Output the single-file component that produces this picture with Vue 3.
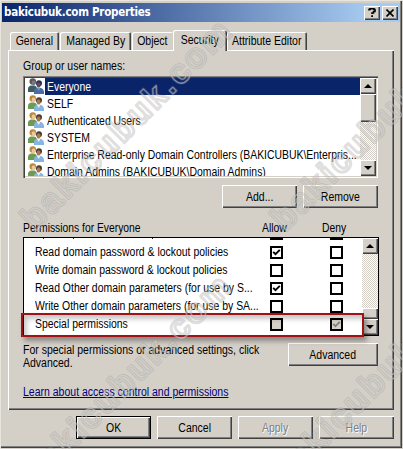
<script setup>
import { ref } from "vue";

const tabs = [
	{ name: "General", cls: "general" },
	{ name: "Managed By", cls: "managed" },
	{ name: "Object", cls: "object" },
	{ name: "Security", cls: "security" },
	{ name: "Attribute Editor", cls: "attribute" },
];
const activeTab = ref("Security");

const users = [
	"Everyone",
	"SELF",
	"Authenticated Users",
	"SYSTEM",
	"Enterprise Read-only Domain Controllers (BAKICUBUK\\Enterpris...",
	"Domain Admins (BAKICUBUK\\Domain Admins)",
];
const selectedUser = ref("Everyone");

const permissions = ref([
	{ name: "Read domain password & lockout policies", allow: true, deny: false },
	{ name: "Write domain password & lockout policies", allow: false, deny: false },
	{ name: "Read Other domain parameters (for use by S...", allow: true, deny: false },
	{ name: "Write Other domain parameters (for use by SA...", allow: false, deny: false },
	{ name: "Special permissions", allow: false, deny: true, disabled: true },
]);

const marks = [
	[35, 232],
	[285, 232],
	[35, 487],
	[285, 487],
];
</script>

<template>
	<div class="dialog">
		<header class="titlebar">
			<span class="title">bakicubuk.com Properties</span>
			<button class="caption">
				<svg width="8" height="9" viewBox="0 0 8 9">
					<path d="M1 2.5V1.5H2V.8H6V1.5H7V3.5H5.5V5H4V6" fill="none" stroke="#000" stroke-width="1.6" />
					<path d="M3.2 7.3h1.8v1.7h-1.8z" />
				</svg>
			</button>
			<button class="caption">
				<svg width="8" height="8" viewBox="0 0 8 8">
					<path d="M.5 .5L7.5 7.5M7.5 .5L.5 7.5" stroke="#000" stroke-width="1.6" />
				</svg>
			</button>
		</header>

		<nav class="tabs">
			<button
				v-for="tab in tabs"
				:key="tab.name"
				class="tab"
				:class="[tab.cls, { active: tab.name === activeTab }]"
				@click="activeTab = tab.name"
			>
				<span class="text">{{ tab.name }}</span>
			</button>
		</nav>

		<main class="page">
			<div class="label"><span class="text">Group or user names:</span></div>
			<div class="users">
				<ul>
					<li
						v-for="user in users"
						:key="user"
						:class="{ selected: user === selectedUser }"
						@click="selectedUser = user"
					>
						<svg class="people" width="16" height="16" viewBox="0 0 16 16">
							<path class="body1" d="M0 14V11Q0 8 3 7.5H6Q9 8 9 11V14Z" />
							<circle class="hair1" cx="4.8" cy="3.6" r="3.3" />
							<ellipse class="face1" cx="5.6" cy="4.8" rx="2" ry="2.6" />
							<path class="body2" d="M6 16V13Q6 10.5 9 9.8H12Q15.8 10.5 16 14V16Z" />
							<circle class="hair2" cx="11" cy="5.3" r="3" />
							<ellipse class="face2" cx="10.6" cy="6.9" rx="2" ry="2.6" />
							<path class="collar" d="M9 10L10.8 13L12.2 10Z" />
						</svg>
						<span class="name"><span class="text">{{ user }}</span></span>
					</li>
				</ul>
				<div class="scrollbar">
					<button class="arrow"><i class="up"></i></button>
					<div class="thumb"></div>
					<button class="arrow last"><i class="down"></i></button>
				</div>
			</div>
			<div class="actions">
				<button class="btn"><span class="text">Add...</span></button>
				<button class="btn"><span class="text">Remove</span></button>
			</div>

			<div class="perm-head">
				<span class="what"><span class="text">Permissions for Everyone</span></span>
				<span class="col"><span class="text">Allow</span></span>
				<span class="col"><span class="text">Deny</span></span>
			</div>
			<div class="perms">
				<div class="perm-list">
					<div class="clipped">
						<i class="tail a"></i><i class="tail b"></i><i class="tail c"></i>
						<i class="edge allow"></i><i class="edge deny"></i>
					</div>
					<div v-for="perm in permissions" :key="perm.name" class="perm" :class="{ disabled: perm.disabled }">
						<span class="what"><span class="text">{{ perm.name }}</span></span>
						<span v-for="side in ['allow', 'deny']" :key="side" class="col">
							<span class="check">
								<svg v-if="perm[side]" width="9" height="9" viewBox="0 0 9 9">
									<path d="M1.2 3.8L3.5 6.2L7.8 1.9" fill="none" stroke="currentColor" stroke-width="1.9" />
								</svg>
							</span>
						</span>
					</div>
				</div>
				<div class="scrollbar">
					<button class="arrow"><i class="up"></i></button>
					<div class="thumb low"></div>
					<button class="arrow"><i class="down"></i></button>
				</div>
				<div class="highlight"></div>
			</div>

			<div class="advanced">
				<p>
					<span class="text">For special permissions or advanced settings, click<br />Advanced.</span>
				</p>
				<button class="btn wide"><span class="text">Advanced</span></button>
			</div>
			<a class="link text">Learn about access control and permissions</a>
		</main>

		<footer class="buttons">
			<button class="btn default"><span class="text">OK</span></button>
			<button class="btn"><span class="text">Cancel</span></button>
			<button class="btn" disabled><span class="text">Apply</span></button>
			<button class="btn" disabled><span class="text">Help</span></button>
		</footer>

		<svg class="watermark" width="403" height="449">
			<g v-for="(m, i) in marks" :key="i" :transform="`translate(${m[0]} ${m[1]}) rotate(-45)`">
				<text class="outer" textLength="280">bakicubuk.com</text>
				<text class="inner" textLength="280">bakicubuk.com</text>
			</g>
		</svg>
	</div>
</template>

<style>
body {
	margin: 0;
	overflow: hidden;
}
</style>

<style scoped>
* {
	box-sizing: border-box;
}

.dialog {
	position: relative;
	width: 403px;
	height: 449px;
	padding: 3px 3px 0 2px;
	overflow: hidden;
	background: #d4d0c8;
	box-shadow: inset 1px 1px #e8e5df, inset -1px -1px #d4d0c8, inset -2px -2px #404040, inset -3px -3px #808080;
	font: 12px/14px "Liberation Sans", Arial, sans-serif;
	color: #000;
}

.text {
	display: inline-block;
	white-space: nowrap;
	transform: scaleX(0.875);
	transform-origin: left;
}

button {
	padding: 0;
	font: inherit;
	color: inherit;
	background: #d4d0c8;
	border: 0;
}

button .text {
	transform-origin: center;
}

.titlebar {
	display: flex;
	align-items: center;
	height: 19px;
	padding: 0 2px 0 2px;
	background: linear-gradient(90deg, #0a246a, #a6caf0 92%);
}

.title {
	flex: 1;
	font: bold 11.5px/19px "DejaVu Sans Condensed", "DejaVu Sans", sans-serif;
	font-stretch: condensed;
	letter-spacing: -0.25px;
	color: #fff;
}

.caption {
	display: flex;
	align-items: center;
	justify-content: center;
	width: 16px;
	height: 14px;
	margin-left: 2px;
	box-shadow: inset 1px 1px #fff, inset -1px -1px #404040, inset -2px -2px #808080;
}

.tabs {
	display: flex;
	align-items: flex-end;
	height: 28px;
	padding-left: 8px;
}

.tab {
	height: 18px;
	margin-right: 1px;
	border-radius: 2px 2px 0 0;
	box-shadow: inset 1px 1px #fff, inset -1px 0 #404040, inset -2px 0 #808080;
}

.general {
	width: 49px;
}

.managed {
	width: 71px;
}

.object {
	width: 41px;
	margin-right: 0;
	box-shadow: inset 1px 1px #fff;
}

.security {
	width: 54px;
}

.attribute {
	width: 80px;
}

.tab.active {
	position: relative;
	height: 21px;
	margin-right: 0;
	margin-bottom: -1px;
	padding-bottom: 2px;
}

.page {
	width: 386px;
	height: 360px;
	margin-left: 6px;
	padding: 9px 0 0 15px;
	box-shadow: inset 1px 1px #fff, inset -1px -1px #404040, inset -2px -2px #808080;
}

.label {
	height: 17px;
}

.users {
	display: flex;
	width: 355px;
	height: 102px;
	padding: 2px;
	background: #fff;
	box-shadow: inset 1px 1px #808080, inset 2px 2px #404040, inset -1px -1px #fff, inset -2px -2px #d4d0c8;
}

ul {
	flex: 1;
	height: 98px;
	margin: 0;
	padding: 0 0 0 3px;
	overflow: hidden;
	list-style: none;
}

li {
	display: flex;
	height: 17px;
}

.people {
	flex: none;
	margin-right: 1px;
}

.name {
	flex: 1;
	min-width: 0;
	height: 17px;
	padding-left: 2px;
	line-height: 18px;
}

.name .text {
	transform: scaleX(0.868);
}

.selected .name {
	color: #fff;
	background: #0a246a;
}

.body1 { fill: #6f9a51; }
.hair1 { fill: #b98a3c; }
.face1 { fill: #edc79c; }
.body2 { fill: #86b5e2; }
.hair2 { fill: #4a3a2e; }
.face2 { fill: #a9774f; }
.collar { fill: #eef6ff; }
.selected .body1 { fill: #3d5c60; }
.selected .hair1 { fill: #5b5650; }
.selected .face1 { fill: #7b7683; }
.selected .body2 { fill: #486da7; }
.selected .hair2 { fill: #29304e; }
.selected .face2 { fill: #5a4e5e; }
.selected .collar { fill: #7f95c0; }

.scrollbar {
	display: flex;
	flex: none;
	flex-direction: column;
	width: 16px;
	background: repeating-conic-gradient(#fff 0 25%, #d4d0c8 0 50%) 0 0 / 2px 2px;
}

.arrow,
.thumb {
	flex: none;
	height: 16px;
	background: #d4d0c8;
	box-shadow: inset 1px 1px #fff, inset -1px -1px #404040, inset -2px -2px #808080;
}

.arrow {
	display: flex;
	align-items: center;
	justify-content: center;
}

.thumb {
	height: 28px;
}

.thumb.low {
	height: 11px;
	margin-top: auto;
}

.arrow.last {
	margin-top: auto;
}

.up,
.down {
	border: 4px solid transparent;
	border-top-width: 0;
	border-bottom: 4px solid #000;
}

.down {
	transform: rotate(180deg);
}

.actions {
	display: flex;
	justify-content: flex-end;
	gap: 6px;
	width: 355px;
	margin-top: 7px;
}

.btn {
	width: 75px;
	height: 23px;
	box-shadow: inset 1px 1px #fff, inset -1px -1px #404040, inset -2px -2px #808080;
}

.btn.wide {
	width: 90px;
}

.btn.default {
	border: 1px solid #000;
}

.btn:disabled {
	color: #808080;
	text-shadow: 1px 1px #fff;
}

.perm-head {
	display: flex;
	height: 29px;
	padding-top: 13px;
}

.what {
	flex: none;
	width: 221px;
}

.col {
	display: flex;
	flex: none;
	justify-content: center;
	width: 60px;
}

.perm-head .text {
	transform: scaleX(0.86);
	transform-origin: left;
}

.perm-head .col .text {
	transform-origin: center;
}

.perms {
	position: relative;
	display: flex;
	width: 356px;
	height: 99px;
	border: 1px solid #000;
	background: #fff;
}

.perm-list {
	flex: 1;
	min-width: 0;
	padding-left: 11px;
	overflow: hidden;
}

.clipped {
	position: relative;
	height: 5px;
}

.tail,
.edge {
	position: absolute;
	top: 0;
	width: 1px;
	height: 1px;
	background: #222;
}

.tail.a { left: 8px; }
.tail.b { left: 38px; }
.tail.c { left: 117px; }

.edge {
	width: 13px;
	height: 2px;
	background: #000;
}

.edge.allow { left: 235px; }
.edge.deny { left: 295px; }

.perm {
	display: flex;
	align-items: center;
	height: 18px;
}

.perm .what {
	width: 211px;
}

.perm .what .text {
	transform: scaleX(0.87);
}

.perm .col {
	justify-content: flex-start;
	padding-left: 24px;
}

.check {
	width: 13px;
	height: 13px;
	border: 2px solid #000;
}

.check svg {
	display: block;
}

.disabled .check {
	color: #808080;
	background: #d4d0c8;
}

/* red callout drawn over the last row */
.highlight {
	position: absolute;
	top: 75px;
	left: -3px;
	width: 343px;
	height: 24px;
	border: 2px solid #a11217;
	box-shadow: 3px 4px 5px rgba(0, 0, 0, 0.35), inset 4px 4px 5px rgba(0, 0, 0, 0.22);
}

.advanced {
	display: flex;
	justify-content: space-between;
	width: 355px;
	margin-top: 7px;
}

.advanced p {
	width: 250px;
	margin: 0;
	padding-top: 1px;
	line-height: 13px;
}

.link {
	margin-top: 15px;
	color: #00007f;
	text-decoration: underline;
}

.buttons {
	display: flex;
	gap: 6px;
	padding: 6px 0 0 74px;
}

/* diagonal outline text tiled over the whole window */
.watermark {
	position: absolute;
	top: 0;
	left: 0;
	pointer-events: none;
}

.watermark text {
	font: bold 34px "Liberation Sans", Arial, sans-serif;
	fill: none;
	stroke-linejoin: round;
}

.outer {
	stroke: rgba(120, 120, 120, 0.24);
	stroke-width: 3px;
}

.inner {
	stroke: rgba(225, 222, 217, 0.5);
	stroke-width: 1.3px;
}
</style>
